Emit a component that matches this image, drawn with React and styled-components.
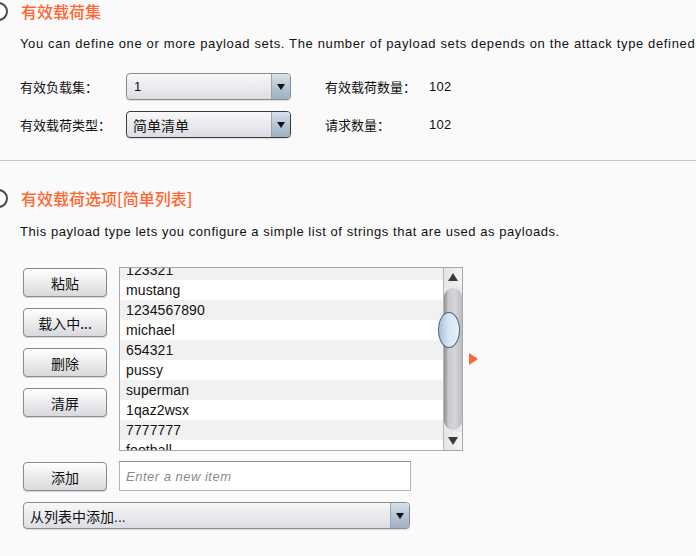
import React from "react";
import styled, { createGlobalStyle } from "styled-components";

const GlobalStyle = createGlobalStyle`
  html, body {
    margin: 0;
    padding: 0;
    background: #fafafa;
  }
  body {
    font-family: "Liberation Sans", "Noto Sans CJK SC", sans-serif;
    color: #111;
    overflow: hidden;
  }
`;

const Page = styled.div`
  width: 696px;
  height: 556px;
  overflow: hidden;
  background: #fafafa;
`;

const Section = styled.section`
  padding-left: 20px;
  display: flex;
  flex-direction: column;
  align-items: flex-start;
  padding-top: ${({ $top }) => $top}px;
`;

const Header = styled.div`
  display: flex;
  align-items: center;
  gap: 13px;
  margin-left: -31px;
  height: 22px;
`;

const HelpCircle = styled.span`
  width: 15px;
  height: 15px;
  border: 2px solid #4a4a4a;
  border-radius: 50%;
  background: #fff;
  flex: none;
`;

const Title = styled.h2`
  margin: 0;
  font-family: "Noto Sans CJK SC", sans-serif;
  font-size: 16px;
  font-weight: 500;
  color: #ff6633;
  line-height: 22px;
`;

const Desc = styled.p`
  margin: ${({ $mt }) => $mt}px 0 0;
  font-size: 13px;
  letter-spacing: ${({ $ls }) => $ls}px;
  line-height: 18px;
  white-space: nowrap;
  color: #111;
`;

const FormGrid = styled.div`
  display: grid;
  grid-template-columns: 106px 165px 34px 104px auto;
  row-gap: 11px;
  align-items: center;
  margin-top: 20px;
`;

const Label = styled.span`
  font-family: "Noto Sans CJK SC", sans-serif;
  font-size: 13px;
  color: #111;
`;

const Value = styled.span`
  font-size: 13px;
  letter-spacing: 0.3px;
  color: #111;
`;

const Select = styled.div`
  display: flex;
  align-items: stretch;
  height: ${({ $h }) => $h || 26}px;
  width: ${({ $w }) => ($w ? `${$w}px` : "auto")};
  box-sizing: border-box;
  border: 1px solid ${({ $focus }) => ($focus ? "#3c3c3c" : "#8c8c8c")};
  border-radius: 4px;
  overflow: hidden;
  background: linear-gradient(#f8f8f8, #e9e9ee 55%, #dcdde2);
  box-shadow: 0 1px 1px rgba(0, 0, 0, 0.12);
`;

const SelectText = styled.span`
  flex: 1;
  display: flex;
  align-items: center;
  padding-left: ${({ $pl }) => $pl || 7}px;
  font-family: "Liberation Sans", "Noto Sans CJK SC", sans-serif;
  font-size: ${({ $fs }) => $fs || 13}px;
  color: #111;
`;

const DropButton = styled.span`
  width: 18px;
  border-left: 1px solid #9aa6b4;
  background: linear-gradient(#d9e1ea, #b7c5d4 50%, #9eb0c3);
  display: flex;
  align-items: center;
  justify-content: center;
  &::after {
    content: "";
    border-left: 4px solid transparent;
    border-right: 4px solid transparent;
    border-top: 6px solid #111;
  }
`;

const Divider = styled.hr`
  margin: 22px 0 0;
  border: none;
  border-top: 1px solid #c8c8c8;
  height: 0;
`;

const Editor = styled.div`
  display: flex;
  align-items: flex-start;
  margin-top: 26px;
  margin-left: 3px;
  gap: 12px;
`;

const ButtonColumn = styled.div`
  display: flex;
  flex-direction: column;
  gap: 11px;
  padding-top: 1px;
`;

const Button = styled.button`
  width: 84px;
  height: 29px;
  box-sizing: border-box;
  border: 1px solid #8a8a8a;
  border-radius: 4px;
  background: linear-gradient(#ffffff, #eeeef0 45%, #d8d9dd);
  box-shadow: 0 1px 1px rgba(0, 0, 0, 0.15);
  font-family: "Noto Sans CJK SC", sans-serif;
  font-size: 14px;
  color: #111;
  padding: 0;
`;

const ListArea = styled.div`
  display: flex;
  align-items: center;
  gap: 6px;
`;

const ListBox = styled.div`
  width: 344px;
  height: 184px;
  box-sizing: border-box;
  border: 1px solid #a8a8a8;
  display: flex;
  background: #fff;
  overflow: hidden;
`;

const Rows = styled.div`
  flex: 1;
  overflow: hidden;
`;

const RowList = styled.ul`
  list-style: none;
  margin: -8px 0 0;
  padding: 0;
`;

const Row = styled.li`
  height: 20px;
  line-height: 20px;
  padding-left: 6px;
  font-size: 14px;
  letter-spacing: 0.1px;
  color: #111;
  background: ${({ $alt }) => ($alt ? "#f1f1f1" : "#fff")};
`;

const Scrollbar = styled.div`
  width: 18px;
  border-left: 1px solid #b8b8b8;
  background: #e9e9ec;
  display: flex;
  flex-direction: column;
`;

const ArrowBtn = styled.div`
  height: 18px;
  display: flex;
  align-items: center;
  justify-content: center;
  background: linear-gradient(90deg, #e4e4e8, #f4f4f6);
  &::after {
    content: "";
    border-left: 5px solid transparent;
    border-right: 5px solid transparent;
    ${({ $up }) =>
      $up ? "border-bottom: 8px solid #3a3a3a;" : "border-top: 8px solid #3a3a3a;"}
  }
`;

const Track = styled.div`
  flex: 1;
  margin: 2px 0;
  border-radius: 9px;
  background: linear-gradient(90deg, #8e8e92, #c9c9cd 25%, #d6d6da 60%, #bcbcc0);
  display: flex;
  flex-direction: column;
  padding-top: 24px;
`;

const Thumb = styled.div`
  height: 36px;
  margin-left: -6px;
  width: 22px;
  box-sizing: border-box;
  border: 1px solid #4e6478;
  border-radius: 50%;
  background: linear-gradient(90deg, #a7c2dc, #d4e4f2 45%, #e8f1f9);
`;

const Marker = styled.span`
  border-top: 6px solid transparent;
  border-bottom: 6px solid transparent;
  border-left: 9px solid #ff6633;
`;

const AddRow = styled.div`
  display: flex;
  align-items: flex-start;
  gap: 12px;
  margin-top: 10px;
  margin-left: 3px;
`;

const AddButtonWrap = styled.div`
  padding-top: 1px;
`;

const Input = styled.input`
  width: 292px;
  height: 30px;
  box-sizing: border-box;
  border: 1px solid #b4b4b4;
  border-top-color: #8e8e8e;
  background: #fff;
  padding: 0 6px;
  font-size: 13px;
  letter-spacing: 0.5px;
  font-family: "Liberation Sans", sans-serif;
  outline: none;
  &::placeholder {
    color: #8a8a8a;
    font-style: italic;
  }
`;

const ComboWrap = styled.div`
  margin-top: 11px;
  margin-left: 3px;
`;

const rows = [
  "123321",
  "mustang",
  "1234567890",
  "michael",
  "654321",
  "pussy",
  "superman",
  "1qaz2wsx",
  "7777777",
  "football",
];

export default function App() {
  return (
    <Page>
      <GlobalStyle />
      <Section $top={0}>
        <Header>
          <HelpCircle />
          <Title>有效载荷集</Title>
        </Header>
        <Desc $mt={13} $ls={0.64}>
          You can define one or more payload sets. The number of payload sets
          depends on the attack type defined in the Positions tab.
        </Desc>
        <FormGrid>
          <Label>有效负载集：</Label>
          <Select $h={27}>
            <SelectText>1</SelectText>
            <DropButton />
          </Select>
          <span />
          <Label>有效载荷数量：</Label>
          <Value>102</Value>

          <Label>有效载荷类型：</Label>
          <Select $h={27} $focus>
            <SelectText $pl={6} $fs={14}>
              简单清单
            </SelectText>
            <DropButton />
          </Select>
          <span />
          <Label>请求数量：</Label>
          <Value>102</Value>
        </FormGrid>
      </Section>
      <Divider />
      <Section $top={26}>
        <Header>
          <HelpCircle />
          <Title>有效载荷选项[简单列表]</Title>
        </Header>
        <Desc $mt={14} $ls={0.55}>
          This payload type lets you configure a simple list of strings that
          are used as payloads.
        </Desc>
        <Editor>
          <ButtonColumn>
            <Button>粘贴</Button>
            <Button>载入中...</Button>
            <Button>删除</Button>
            <Button>清屏</Button>
          </ButtonColumn>
          <ListArea>
            <ListBox>
              <Rows>
                <RowList>
                  {rows.map((r, i) => (
                    <Row key={r} $alt={i % 2 === 0}>
                      {r}
                    </Row>
                  ))}
                </RowList>
              </Rows>
              <Scrollbar>
                <ArrowBtn $up />
                <Track>
                  <Thumb />
                </Track>
                <ArrowBtn />
              </Scrollbar>
            </ListBox>
            <Marker />
          </ListArea>
        </Editor>
        <AddRow>
          <AddButtonWrap>
            <Button>添加</Button>
          </AddButtonWrap>
          <Input placeholder="Enter a new item" />
        </AddRow>
        <ComboWrap>
          <Select $w={387} $h={27}>
            <SelectText $pl={6} $fs={14}>
              从列表中添加...
            </SelectText>
            <DropButton />
          </Select>
        </ComboWrap>
      </Section>
    </Page>
  );
}
